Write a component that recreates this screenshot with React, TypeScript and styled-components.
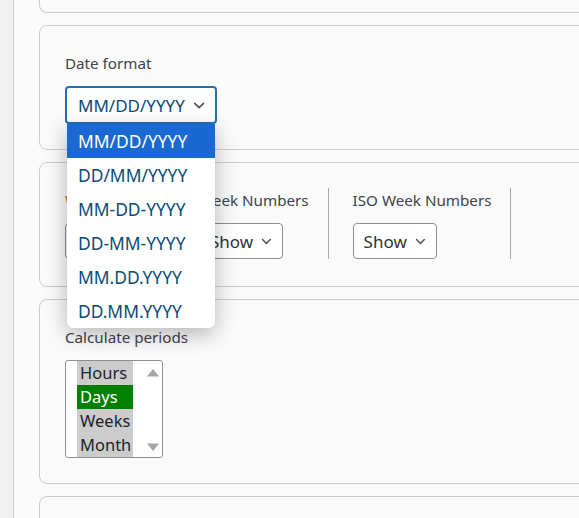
import React, { useState } from "react"
import styled, { createGlobalStyle } from "styled-components"

const GlobalStyle = createGlobalStyle`
    html, body {
        margin: 0;
        padding: 0;
        background: #fafafa;
        overflow: hidden;
        font-family: "Noto Sans", "Open Sans", sans-serif;
    }
`

const formats = ['MM/DD/YYYY', 'DD/MM/YYYY', 'MM-DD-YYYY', 'DD-MM-YYYY', 'MM.DD.YYYY', 'DD.MM.YYYY']
const periods = ['Hours', 'Days', 'Weeks', 'Month']

const Chevron = () => (
    <svg width="14" height="9" viewBox="0 0 14 9" fill="none">
        <path d="M2 2l5 5 5-5" stroke="#50575e" strokeWidth="2" strokeLinecap="round" strokeLinejoin="round" />
    </svg>
)

export default function App() {
    const [format, setFormat] = useState('MM/DD/YYYY')
    const [period, setPeriod] = useState('Days')

    return (
        <Page>
            <GlobalStyle />
            <Sidebar />
            <Main>
                <Card $clipped />
                <Card>
                    <Label>Date format</Label>
                    <SelectWrap>
                        <Select $focused>
                            <span>{format}</span>
                            <Chevron />
                        </Select>
                        <Menu>
                            {formats.map((f) => (
                                <MenuItem key={f} $active={f === format} onClick={() => setFormat(f)}>{f}</MenuItem>
                            ))}
                        </Menu>
                    </SelectWrap>
                </Card>
                <Card>
                    <Columns>
                        <Column>
                            <Label $accent>Week</Label>
                            <Select $width={90}>
                                <span>Sun</span>
                                <Chevron />
                            </Select>
                        </Column>
                        <Divider />
                        <Column>
                            <Label>Week Numbers</Label>
                            <Select $width={84}>
                                <span>Show</span>
                                <Chevron />
                            </Select>
                        </Column>
                        <Divider />
                        <Column>
                            <Label>ISO Week Numbers</Label>
                            <Select $width={84}>
                                <span>Show</span>
                                <Chevron />
                            </Select>
                        </Column>
                        <Divider />
                    </Columns>
                </Card>
                <Card $tall>
                    <Label>Calculate periods</Label>
                    <ListBox>
                        <Options>
                            {periods.map((p) => (
                                <Option key={p} $selected={p === period} onClick={() => setPeriod(p)}>{p}</Option>
                            ))}
                        </Options>
                        <ScrollBar>
                            <svg width="14" height="9" viewBox="0 0 14 9"><path d="M1 8.5L7 1l6 7.5z" fill="#a3a3a3" /></svg>
                            <svg width="14" height="9" viewBox="0 0 14 9"><path d="M1 .5L7 8l6-7.5z" fill="#a3a3a3" /></svg>
                        </ScrollBar>
                    </ListBox>
                </Card>
                <Card $clipped />
            </Main>
        </Page>
    )
}

const Page = styled.div`
    display: flex;
    width: 579px;
    height: 518px;
    overflow: hidden;
`
const Sidebar = styled.div`
    width: 13px;
    flex-shrink: 0;
    background: #f0f0f0;
    border-right: 1px solid #cfcfcf;
`
const Main = styled.div`
    display: flex;
    flex-direction: column;
    gap: 12px;
    padding-left: 25px;
    width: 700px;
    flex-shrink: 0;
`
const Card = styled.div<{ $clipped?: boolean; $tall?: boolean }>`
    border: 1px solid #cccccc;
    border-radius: 8px;
    background: #fafafa;
    padding: 27px 25px 24px;
    height: ${(p) => (p.$tall ? '185px' : '125px')};
    box-sizing: border-box;
    flex-shrink: 0;
    &:first-child {
        height: 13px;
        border-top: none;
        border-radius: 0 0 8px 8px;
        padding: 0;
    }
    ${(p) => p.$clipped && `height: 40px; padding: 0;`}
`
const Label = styled.div<{ $accent?: boolean }>`
    font-size: 15.2px;
    line-height: 20px;
    color: ${(p) => (p.$accent ? '#b5651d' : '#3c434a')};
    margin-bottom: 13px;
    white-space: nowrap;
`
const SelectWrap = styled.div`
    position: relative;
    width: fit-content;
`
const Select = styled.div<{ $focused?: boolean; $width?: number }>`
    display: flex;
    align-items: center;
    justify-content: space-between;
    gap: 8px;
    box-sizing: border-box;
    width: ${(p) => (p.$width ? `${p.$width}px` : '152px')};
    height: ${(p) => (p.$focused ? '38px' : '36px')};
    padding: 0 10px 0 ${(p) => (p.$focused ? '11px' : '10px')};
    border: ${(p) => (p.$focused ? '2px solid #2271b1' : '1px solid #8c8f94')};
    border-radius: 4px;
    background: #fff;
    color: ${(p) => (p.$focused ? '#0a4b78' : '#2c3338')};
    font-size: 17px;
    white-space: nowrap;
`
const Menu = styled.div`
    position: absolute;
    top: 38px;
    left: 2px;
    width: 148px;
    background: #fff;
    border-radius: 0 0 7px 7px;
    box-shadow: 0 6px 22px rgba(0, 0, 0, 0.28);
    overflow: hidden;
    z-index: 10;
`
const MenuItem = styled.div<{ $active?: boolean }>`
    height: 34px;
    display: flex;
    align-items: center;
    padding-left: 11px;
    font-size: 17.4px;
    color: ${(p) => (p.$active ? '#fff' : '#0a4b78')};
    background: ${(p) => (p.$active ? '#1a68d1' : '#fff')};
    cursor: default;
`
const Columns = styled.div`
    display: flex;
    align-items: stretch;
`
const Column = styled.div`
    display: flex;
    flex-direction: column;
    padding-right: 19px;
    &:not(:first-child) {
        padding-left: 24px;
    }
`
const Divider = styled.div`
    width: 1px;
    background: #a7aaad;
    margin-top: -2px;
`
const ListBox = styled.div`
    display: flex;
    width: 98px;
    height: 98px;
    box-sizing: border-box;
    border: 1px solid #8c8f94;
    border-radius: 3px;
    background: #fff;
    padding-left: 11px;
    overflow: hidden;
`
const Options = styled.div`
    display: flex;
    flex-direction: column;
    align-items: flex-start;
    width: 56px;
    background: #cccccc;
`
const Option = styled.div<{ $selected?: boolean }>`
    width: 56px;
    box-sizing: border-box;
    height: 24.2px;
    line-height: 24px;
    padding-left: 3px;
    font-size: 16.5px;
    white-space: nowrap;
    overflow: hidden;
    color: ${(p) => (p.$selected ? '#fff' : '#1d2327')};
    background: ${(p) => (p.$selected ? '#008000' : '#cccccc')};
`
const ScrollBar = styled.div`
    display: flex;
    flex-direction: column;
    justify-content: space-between;
    align-items: center;
    flex: 1;
    padding: 7px 0 5px 10px;
`
